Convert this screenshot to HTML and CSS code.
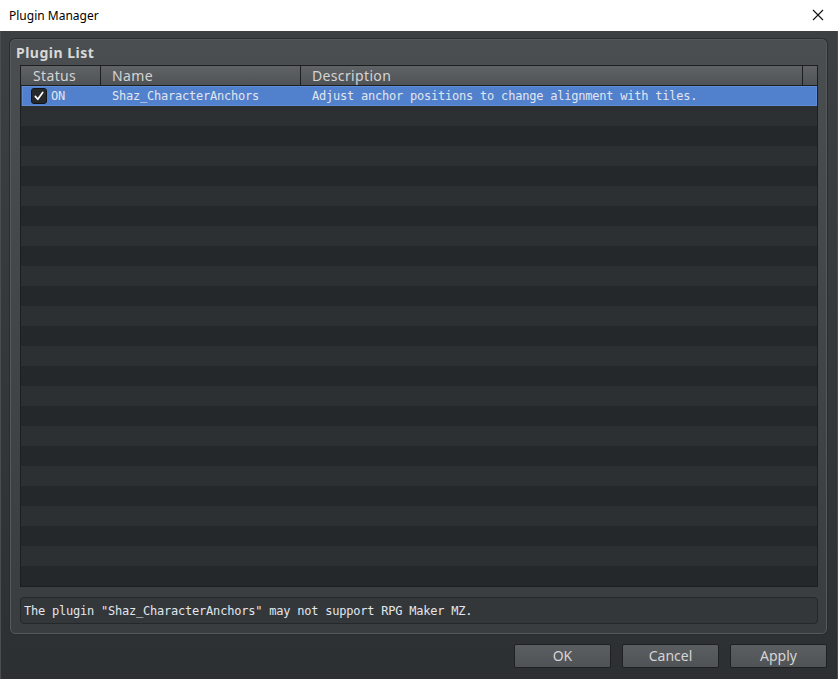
FILE: index.html
```html
<!DOCTYPE html>
<html>
<head>
<meta charset="utf-8">
<link rel="stylesheet" href="styles.css">
</head>
<body>
<div class="window">
  <div class="titlebar">
    <span class="title">Plugin Manager</span>
    <svg class="close" width="12" height="12" viewBox="0 0 12 12"><path d="M1 1 L11 11 M11 1 L1 11" stroke="#111" stroke-width="1.1" fill="none"/></svg>
  </div>
  <div class="client">
    <div class="group">
      <div class="group-title">Plugin List</div>
      <div class="table">
        <div class="thead">
          <div class="th c-status">Status</div>
          <div class="th c-name">Name</div>
          <div class="th c-desc">Description</div>
          <div class="th c-end"></div>
        </div>
        <div class="tbody">
          <div class="row selected">
            <div class="td c-status"><span class="check"><svg width="10" height="10" viewBox="0 0 10 10"><path d="M1.3 5.4 L3.8 8.3 L8.7 1.5" stroke="#ffffff" stroke-width="1.7" fill="none" stroke-linecap="round" stroke-linejoin="round"/></svg></span><span class="on">ON</span></div>
            <div class="td c-name">Shaz_CharacterAnchors</div>
            <div class="td c-desc">Adjust anchor positions to change alignment with tiles.</div>
          </div>
          <div class="row"></div><div class="row"></div><div class="row"></div><div class="row"></div>
          <div class="row"></div><div class="row"></div><div class="row"></div><div class="row"></div>
          <div class="row"></div><div class="row"></div><div class="row"></div><div class="row"></div>
          <div class="row"></div><div class="row"></div><div class="row"></div><div class="row"></div>
          <div class="row"></div><div class="row"></div><div class="row"></div><div class="row"></div>
          <div class="row"></div><div class="row"></div><div class="row"></div><div class="row"></div>
        </div>
      </div>
      <div class="message">The plugin "Shaz_CharacterAnchors" may not support RPG Maker MZ.</div>
    </div>
    <div class="buttons">
      <button class="btn">OK</button>
      <button class="btn">Cancel</button>
      <button class="btn">Apply</button>
    </div>
  </div>
</div>
</body>
</html>
```
FILE: styles.css
```css
html, body {
  margin: 0;
  padding: 0;
  width: 838px;
  height: 679px;
  overflow: hidden;
  background: #2e3134;
}
.window {
  width: 838px;
  height: 679px;
  display: flex;
  flex-direction: column;
}
.titlebar {
  height: 31px;
  background: #ffffff;
  display: flex;
  align-items: center;
  justify-content: space-between;
  padding: 0 14px 0 9px;
  flex: none;
}
.title {
  font-family: "Noto Sans", "Open Sans", sans-serif;
  font-size: 12px;
  color: #000;
}
.close {
  display: block;
  margin-top: -2px;
}
.client {
  flex: 1;
  display: flex;
  flex-direction: column;
  padding: 8px 10px 11px 9px;
  background: linear-gradient(#3d4043, #2d3033);
  border-left: 1px solid #4a4d50;
  border-right: 1px solid #4a4d50;
}
.group {
  height: 595px;
  box-sizing: border-box;
  border: 1px solid #56595c;
  border-radius: 5px;
  background: linear-gradient(#4b4e51, #3a3d40);
  box-shadow: 0 0 0 1px #2a2d30;
  padding: 0 8px 9px 9px;
  display: flex;
  flex-direction: column;
}
.group-title {
  height: 26px;
  box-sizing: border-box;
  padding: 3px 0 0 0;
  margin-left: -4px;
  font-family: "Noto Sans", "Open Sans", sans-serif;
  font-weight: bold;
  font-size: 14px;
  letter-spacing: 0.5px;
  color: #d8d8d8;
}
.table {
  border: 1px solid #1c1e20;
  display: flex;
  flex-direction: column;
}
.thead {
  height: 19px;
  display: flex;
  border-bottom: 1px solid #1c1e20;
  background: linear-gradient(#606366, #505356);
}
.th {
  font-family: "Noto Sans", "Open Sans", sans-serif;
  font-size: 14px;
  letter-spacing: 0.35px;
  color: #d4d4d4;
  line-height: 19px;
  box-sizing: border-box;
  white-space: nowrap;
}
.c-status { width: 80px; padding-left: 12px; }
.c-name { width: 200px; padding-left: 11px; }
.c-desc { width: 502px; padding-left: 11px; }
.c-end { flex: 1; }
.th.c-status, .th.c-name, .th.c-desc { border-right: 1px solid #1c1e20; }
.tbody {
  display: flex;
  flex-direction: column;
}
.row {
  height: 20px;
  display: flex;
  background: #25282b;
}
.row:nth-child(even) {
  background: #2d3033;
}
.row.selected {
  background: #5180cd;
  box-shadow: inset 0 0 0 1px #5f8ed6;
  margin-left: 1px;
}
.td {
  font-family: "DejaVu Sans Mono", "Liberation Mono", monospace;
  font-size: 12px;
  letter-spacing: -0.22px;
  color: #e2e6ee;
  line-height: 20px;
  box-sizing: border-box;
  white-space: nowrap;
}
.row .c-status {
  width: 79px;
  padding-left: 9px;
  display: flex;
  align-items: center;
}
.row .c-name { width: 200px; padding-left: 11px; }
.row .c-desc { width: 502px; padding-left: 11px; }
.check {
  width: 16px;
  height: 16px;
  box-sizing: border-box;
  border: 1px solid #121315;
  border-radius: 3px;
  background: #26292c;
  display: flex;
  align-items: center;
  justify-content: center;
  margin-right: 4px;
}
.check svg { display: block; }
.on { line-height: 20px; }
.message {
  margin-top: 10px;
  height: 27px;
  box-sizing: border-box;
  border: 1px solid #25282b;
  border-radius: 4px;
  background: #33373a;
  padding-left: 3px;
  font-family: "DejaVu Sans Mono", "Liberation Mono", monospace;
  font-size: 12px;
  letter-spacing: -0.22px;
  color: #e2e6ee;
  line-height: 27px;
  white-space: nowrap;
}
.buttons {
  margin-top: 10px;
  display: flex;
  justify-content: flex-end;
  gap: 11px;
}
.btn {
  width: 97px;
  height: 24px;
  box-sizing: border-box;
  border: 1px solid #1e2022;
  border-radius: 2px;
  background: linear-gradient(#5b5e61, #505356);
  color: #d4d4d4;
  font-family: "Noto Sans", "Open Sans", sans-serif;
  font-size: 14px;
  padding: 0;
  line-height: 22px;
}
```
